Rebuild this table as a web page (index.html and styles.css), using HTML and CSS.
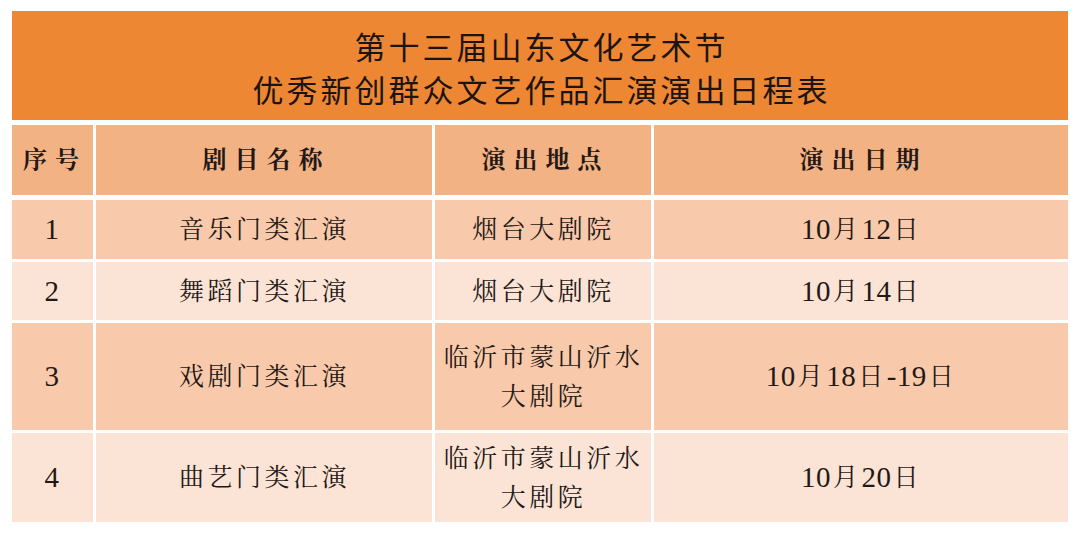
FILE: index.html
```html
<!DOCTYPE html>
<html lang="zh-CN">
<head>
<meta charset="utf-8">
<title>演出日程表</title>
<link rel="stylesheet" href="styles.css">
</head>
<body>
<div class="page">
  <div class="title">
    <div class="title-line">第十三届山东文化艺术节</div>
    <div class="title-line">优秀新创群众文艺作品汇演演出日程表</div>
  </div>
  <div class="table">
    <div class="row head">
      <div class="cell">序号</div>
      <div class="cell">剧目名称</div>
      <div class="cell">演出地点</div>
      <div class="cell">演出日期</div>
    </div>
    <div class="row odd r1">
      <div class="cell"><span class="num">1</span></div>
      <div class="cell">音乐门类汇演</div>
      <div class="cell">烟台大剧院</div>
      <div class="cell"><span class="num">10</span>月<span class="num">12</span>日</div>
    </div>
    <div class="row even r2">
      <div class="cell"><span class="num">2</span></div>
      <div class="cell">舞蹈门类汇演</div>
      <div class="cell">烟台大剧院</div>
      <div class="cell"><span class="num">10</span>月<span class="num">14</span>日</div>
    </div>
    <div class="row odd r3">
      <div class="cell"><span class="num">3</span></div>
      <div class="cell">戏剧门类汇演</div>
      <div class="cell">临沂市蒙山沂水大剧院</div>
      <div class="cell"><span class="num">10</span>月<span class="num">18</span>日<span class="num">-19</span>日</div>
    </div>
    <div class="row even r4">
      <div class="cell"><span class="num">4</span></div>
      <div class="cell">曲艺门类汇演</div>
      <div class="cell">临沂市蒙山沂水大剧院</div>
      <div class="cell"><span class="num">10</span>月<span class="num">20</span>日</div>
    </div>
  </div>
</div>
</body>
</html>
```
FILE: styles.css
```css
html, body {
  margin: 0;
  padding: 0;
  background: #ffffff;
}
.page {
  padding: 11px 0 0 12px;
  width: 1056px;
}
.title {
  height: 109px;
  background: #ee8733;
  display: flex;
  flex-direction: column;
  justify-content: center;
  align-items: center;
  font-family: "Noto Sans CJK SC", "Noto Sans", sans-serif;
  font-size: 31px;
  line-height: 43px;
  letter-spacing: 3px;
  color: #1c1410;
  padding: 2px 0 0 3px;
  box-sizing: border-box;
}
.table {
  margin-top: 5px;
  display: flex;
  flex-direction: column;
  gap: 3px;
}
.row {
  display: grid;
  grid-template-columns: 81px 336px 216px 414px;
  column-gap: 3px;
}
.cell {
  display: flex;
  align-items: center;
  justify-content: center;
  flex-wrap: wrap;
  align-content: center;
  text-align: center;
  font-family: "Liberation Serif", "Noto Serif CJK SC", "Noto Sans CJK SC", serif;
  font-size: 25px;
  line-height: 39px;
  letter-spacing: 3.5px;
  color: #231815;
  padding: 0 4px 0 5px;
}
.num {
  font-family: "Liberation Serif", serif;
  font-size: 29px;
  letter-spacing: 0.5px;
  margin-right: 2px;
}
.head {
  height: 70px;
  margin-bottom: 2px;
}
.head .cell {
  background: #f3b283;
  font-weight: bold;
  font-size: 24px;
  letter-spacing: 8px;
  padding-left: 9px;
}
.odd .cell {
  background: #f8caab;
}
.even .cell {
  background: #fbe4d5;
}
.r1 { height: 59px; }
.r2 { height: 58px; }
.r3 { height: 107px; }
.r4 { height: 89px; }
```
